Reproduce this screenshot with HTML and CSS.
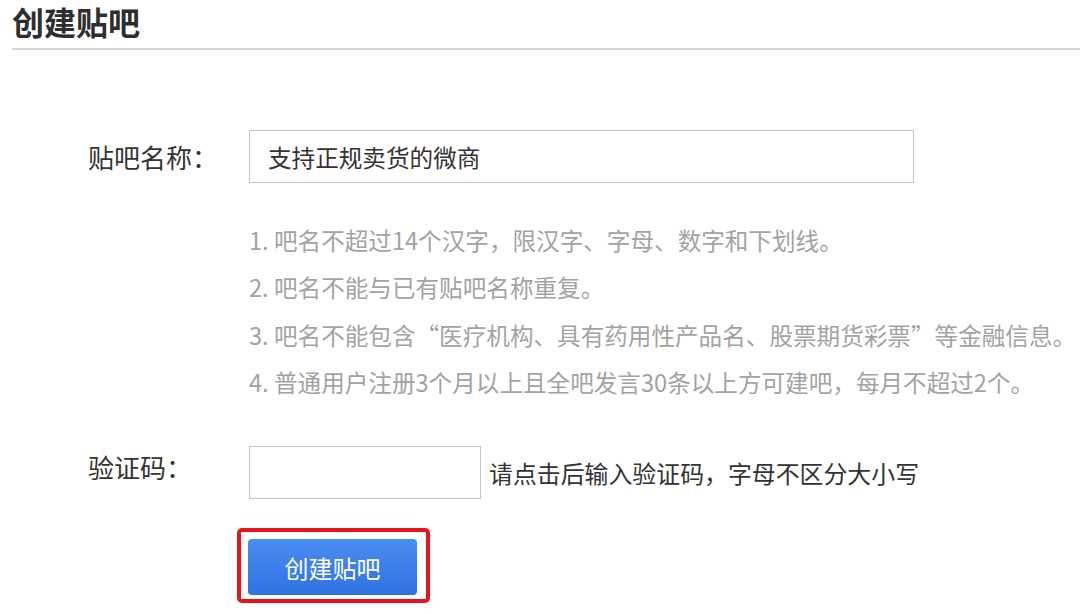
FILE: index.html
```html
<!DOCTYPE html>
<html lang="zh-CN">
<head>
    <meta charset="UTF-8">
    <meta name="viewport" content="width=device-width, initial-scale=1.0">
    <title>创建贴吧</title>
    <link rel="stylesheet" href="styles.css">
</head>
<body>
    <div class="header">
        <h1>创建贴吧</h1>
    </div>

    <form class="create-form">
        <div class="row">
            <label class="label" for="barName">贴吧名称：</label>
            <input class="name-input" id="barName" type="text" value="支持正规卖货的微商">
        </div>

        <ol class="rules">
            <li>1. 吧名不超过14个汉字，限汉字、字母、数字和下划线。</li>
            <li>2. 吧名不能与已有贴吧名称重复。</li>
            <li>3. 吧名不能包含“医疗机构、具有药用性产品名、股票期货彩票”等金融信息。</li>
            <li>4. 普通用户注册3个月以上且全吧发言30条以上方可建吧，每月不超过2个。</li>
        </ol>

        <div class="row captcha-row">
            <label class="label" for="captcha">验证码：</label>
            <input class="captcha-input" id="captcha" type="text">
            <span class="captcha-tip">请点击后输入验证码，字母不区分大小写</span>
        </div>

        <div class="submit-row">
            <span class="highlight">
                <button type="button" class="submit-btn">创建贴吧</button>
            </span>
        </div>
    </form>
</body>
</html>
```

FILE: styles.css
```css
body {
    font-family: "Noto Sans CJK SC", "Noto Sans", sans-serif;
    background-color: #ffffff;
    color: #333333;
    margin: 0;
    padding: 0;
}

.header {
    margin-left: 12px;
    border-bottom: 2px solid #d6d6d6;
    padding-bottom: 6px;
}

h1 {
    margin: 0;
    font-size: 32px;
    font-weight: bold;
    line-height: 42px;
    color: #2e2e2e;
}

.create-form {
    padding: 80px 0 0 88px;
}

.row {
    display: flex;
    align-items: center;
}

.label {
    width: 161px;
    flex-shrink: 0;
    font-size: 26px;
    line-height: 34px;
    color: #333333;
}

input {
    font-family: "Noto Sans CJK SC", "Noto Sans", sans-serif;
    border: 1px solid #c4c4c4;
    box-sizing: border-box;
    outline: none;
    margin: 0;
}

.name-input {
    width: 665px;
    height: 53px;
    padding: 0 0 0 18px;
    font-size: 23.6px;
    color: #333333;
}

.rules {
    list-style: none;
    margin: 34px 0 0 161px;
    padding: 0;
    font-size: 23.6px;
    line-height: 47.3px;
    color: #a3a3a3;
    white-space: nowrap;
}

.captcha-row {
    margin-top: 40px;
    align-items: flex-start;
}

.captcha-row .label {
    padding-top: 4px;
}

.captcha-input {
    width: 232px;
    height: 53px;
}

.captcha-tip {
    margin-left: 8px;
    font-size: 23.9px;
    line-height: 53px;
    color: #333333;
}

.submit-row {
    margin: 29px 0 0 149px;
}

.highlight {
    display: inline-block;
    border: 4px solid #e8141c;
    border-radius: 5px;
    padding: 7px 9px 4px 7px;
}

.submit-btn {
    display: block;
    width: 169px;
    height: 56px;
    border: none;
    border-radius: 4px;
    background: linear-gradient(#4b8df0, #2f72e2);
    color: #ffffff;
    font-family: "Noto Sans CJK SC", "Noto Sans", sans-serif;
    font-size: 24px;
    cursor: pointer;
}
```
